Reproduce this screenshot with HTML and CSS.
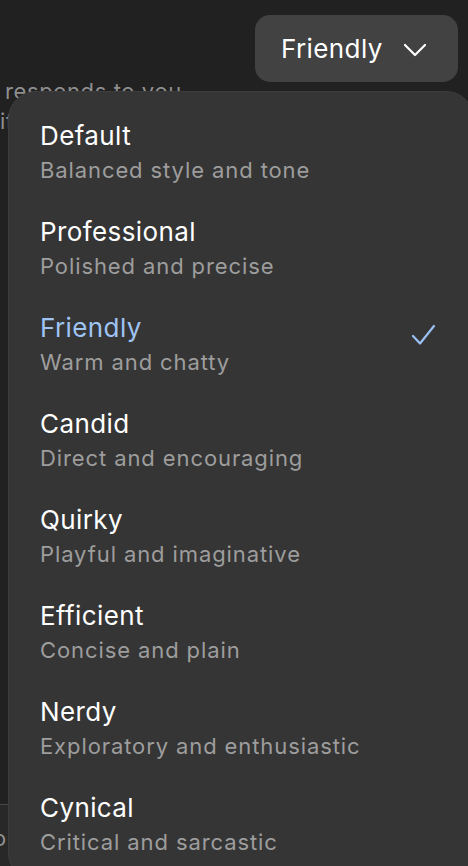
FILE: index.html
```html
<!DOCTYPE html>
<html lang="en">
<head>
<meta charset="utf-8">
<title>Personality</title>
<link rel="stylesheet" href="styles.css">
</head>
<body>
<div class="page">
  <div class="topbar">
    <button class="select">
      <span class="select-label">Friendly</span>
      <svg class="chev" width="24" height="14" viewBox="0 0 24 14"><path d="M2 2 L12 12 L22 2" fill="none" stroke="#fff" stroke-width="2.2" stroke-linecap="round" stroke-linejoin="round"/></svg>
    </button>
  </div>
  <p class="bg-text">responds to you<br><span class="bg-line2">it</span></p>
  <div class="spacer"></div>
  <div class="bg-card"><span class="bg-card-text">o</span></div>

  <div class="menu">
    <div class="item"><div class="title">Default</div><div class="sub">Balanced style and tone</div></div>
    <div class="item"><div class="title">Professional</div><div class="sub">Polished and precise</div></div>
    <div class="item selected"><div class="title">Friendly</div><div class="sub">Warm and chatty</div>
      <svg class="check" width="26" height="22" viewBox="0 0 26 22"><path d="M2 12 L9 19.5 L23 2" fill="none" stroke="#99c0f5" stroke-width="2.2" stroke-linecap="round" stroke-linejoin="round"/></svg>
    </div>
    <div class="item"><div class="title">Candid</div><div class="sub">Direct and encouraging</div></div>
    <div class="item"><div class="title">Quirky</div><div class="sub">Playful and imaginative</div></div>
    <div class="item"><div class="title">Efficient</div><div class="sub">Concise and plain</div></div>
    <div class="item"><div class="title">Nerdy</div><div class="sub">Exploratory and enthusiastic</div></div>
    <div class="item"><div class="title">Cynical</div><div class="sub">Critical and sarcastic</div></div>
  </div>
</div>
</body>
</html>
```
FILE: styles.css
```css
html, body {
  margin: 0;
  padding: 0;
  background: #212121;
  height: 866px;
  overflow: hidden;
}
body {
  font-family: Inter, "Noto Sans", "Liberation Sans", sans-serif;
  color: #fff;
}
.page {
  position: relative;
  height: 866px;
  display: flex;
  flex-direction: column;
}
.topbar {
  display: flex;
  justify-content: flex-end;
  padding: 15px 10px 0 0;
}
.select {
  width: 203px;
  height: 67px;
  border: 0;
  border-radius: 15px;
  background: #424242;
  color: #fff;
  font-family: inherit;
  font-size: 26px;
  letter-spacing: 0.4px;
  display: flex;
  align-items: center;
  padding: 0 0 0 26px;
  gap: 20px;
}
.select-label { line-height: 1; }
.chev { flex: none; margin-top: 2px; }
.bg-text {
  margin: -6px 0 0 0;
  padding: 0 0 0 5px;
  font-size: 22px;
  letter-spacing: 0.6px;
  line-height: 30px;
  color: #8f8f8f;
}
.bg-line2 { margin-left: -5px; }
.spacer { flex: 1; }
.bg-card {
  height: 62px;
  border-top: 1.5px solid #464646;
  background: #282828;
  font-size: 22px;
  color: #8f8f8f;
  padding-top: 20px;
  box-sizing: border-box;
}
.bg-card-text { margin-left: -7px; }

.menu {
  position: absolute;
  left: 8px;
  top: 91px;
  width: 466px;
  height: 790px;
  box-sizing: border-box;
  background: #353535;
  border: 1px solid #3d3d3d;
  border-radius: 28px;
  padding: 10px 0;
}
.item {
  position: relative;
  height: 96px;
  box-sizing: border-box;
  padding: 18px 31px;
}
.title {
  font-size: 26px;
  letter-spacing: 0.4px;
  line-height: 32px;
  color: #fff;
}
.sub {
  font-size: 22px;
  letter-spacing: 0.9px;
  line-height: 30px;
  color: #9d9d9d;
  margin-top: 3px;
}
.selected .title { color: #9fc4f4; }
.check {
  position: absolute;
  left: 402px;
  top: 30px;
}
```
